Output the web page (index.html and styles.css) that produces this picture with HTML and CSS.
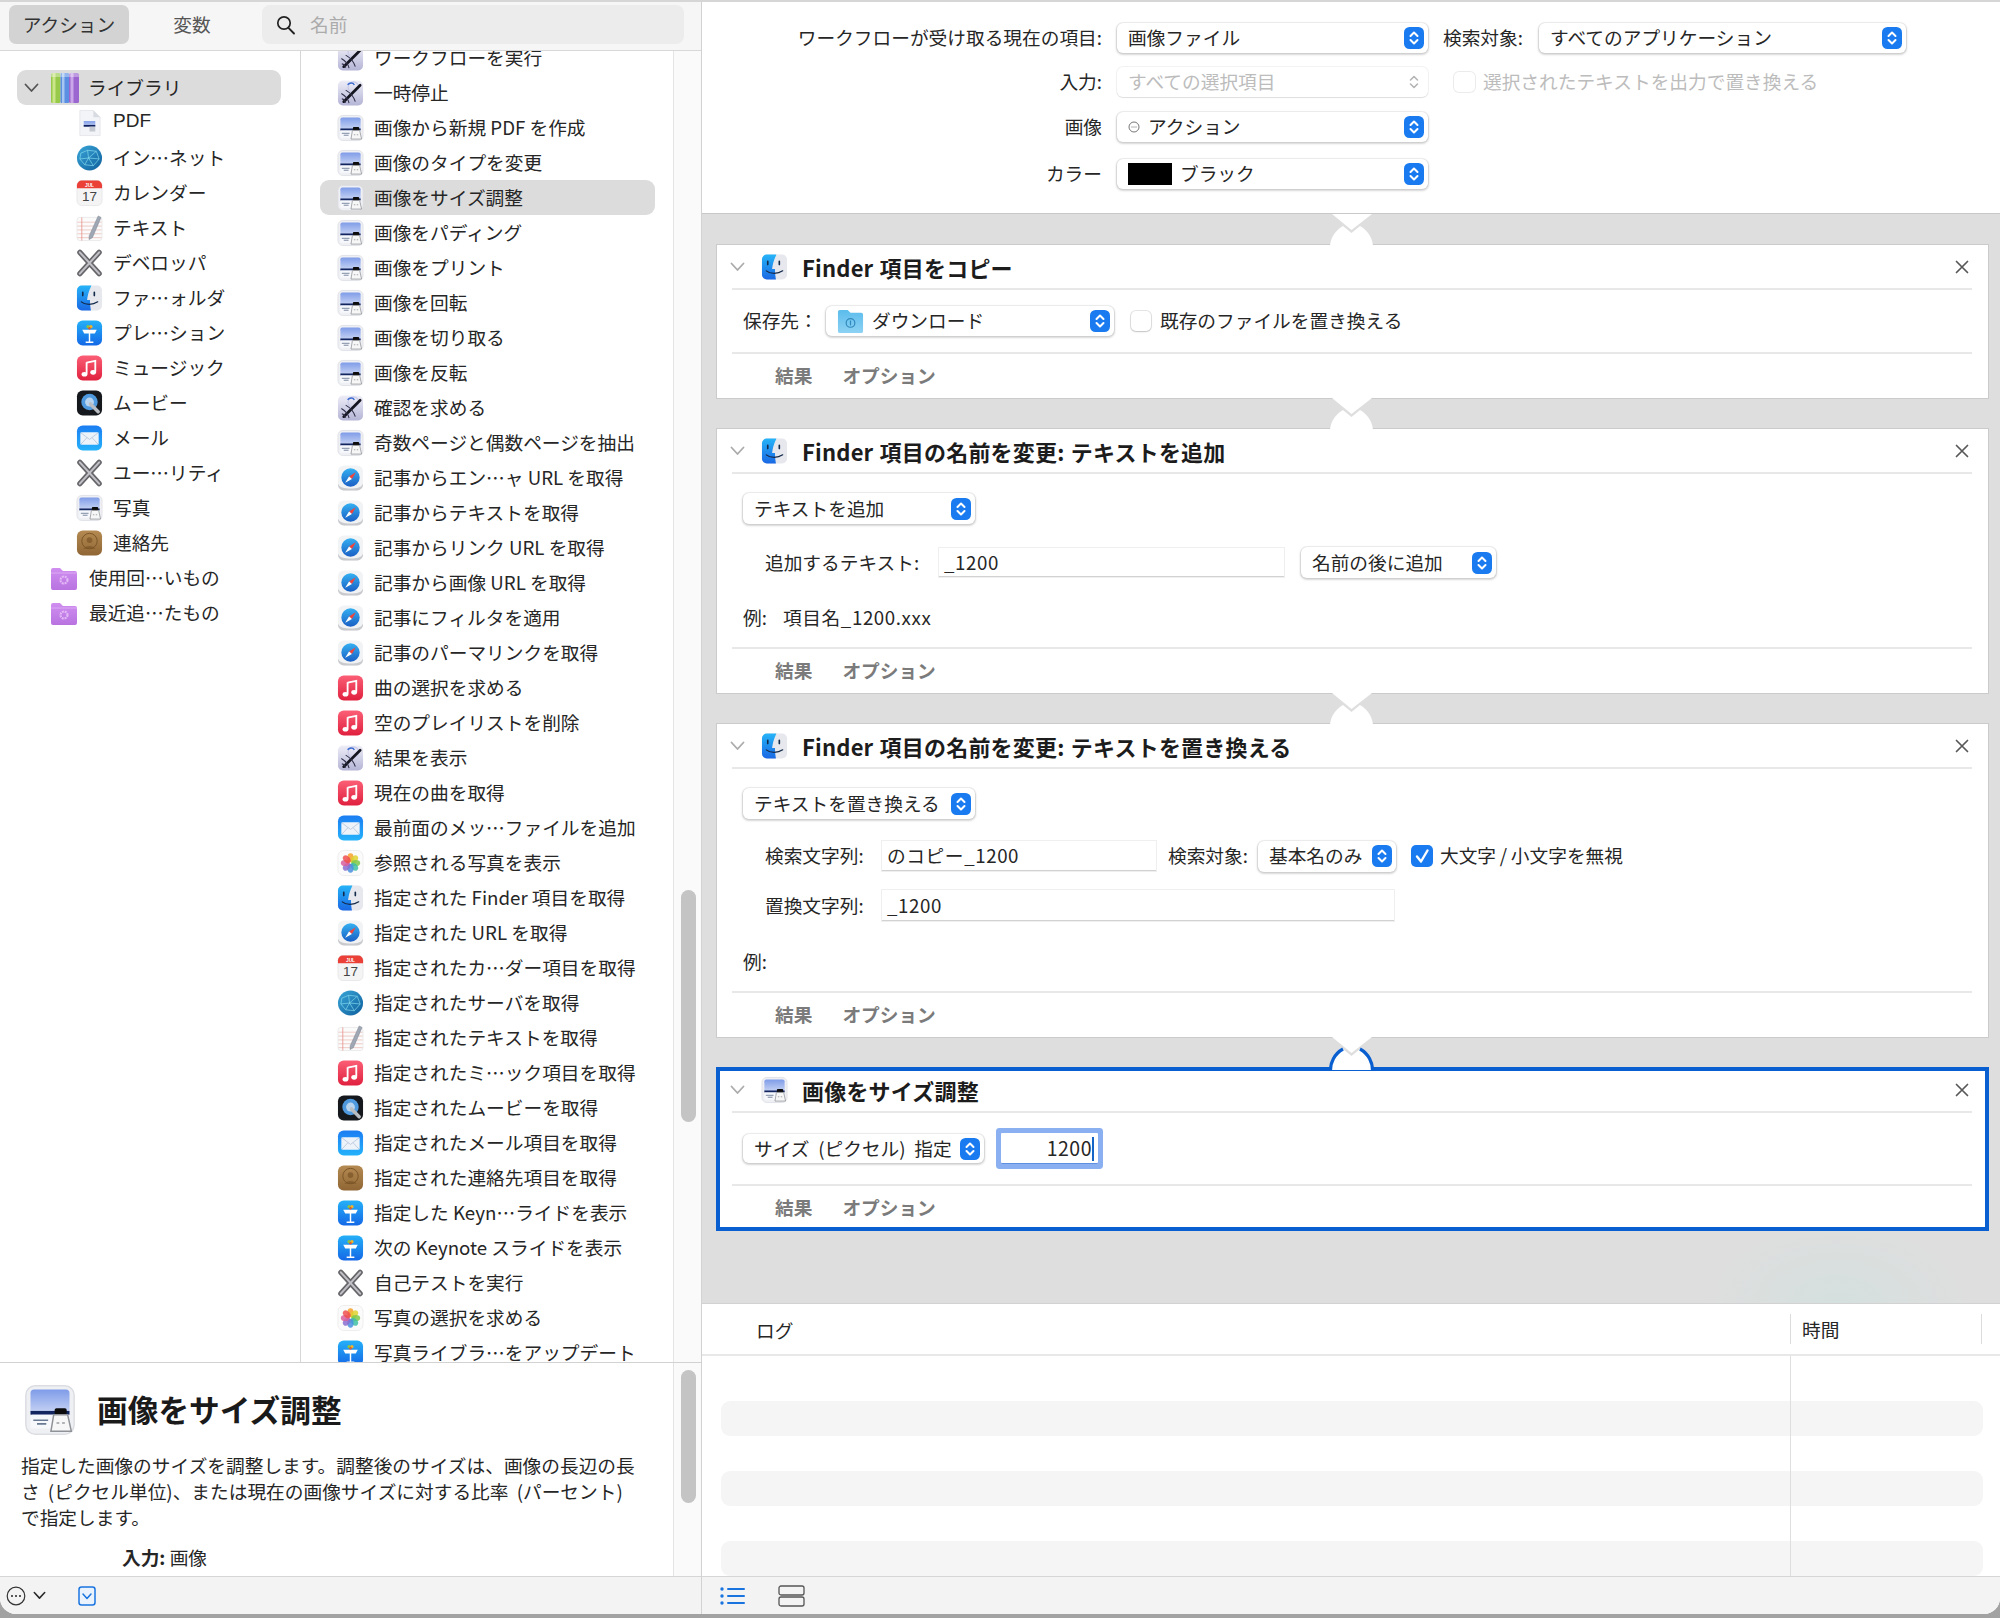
FILE: index.html
```html
<!DOCTYPE html>
<html lang="ja">
<head>
<meta charset="utf-8">
<title>Automator</title>
<link rel="stylesheet" href="styles.css">
</head>
<body>
<svg class="sprite" xmlns="http://www.w3.org/2000/svg" aria-hidden="true">
  <defs>
    <linearGradient id="gSky" x1="0" y1="0" x2="0" y2="1"><stop offset="0" stop-color="#7f9ce8"/><stop offset="1" stop-color="#ccd7f4"/></linearGradient>
    <linearGradient id="gRobot" x1="0" y1="0" x2="0" y2="1"><stop offset="0" stop-color="#eeeef8"/><stop offset="1" stop-color="#b4b4d6"/></linearGradient>
    <linearGradient id="gSafari" x1="0" y1="0" x2="0" y2="1"><stop offset="0" stop-color="#35b0f2"/><stop offset="1" stop-color="#1a5fc4"/></linearGradient>
    <linearGradient id="gMusic" x1="0" y1="0" x2="0" y2="1"><stop offset="0" stop-color="#fb5f76"/><stop offset="1" stop-color="#e0203e"/></linearGradient>
    <linearGradient id="gMail" x1="0" y1="0" x2="0" y2="1"><stop offset="0" stop-color="#1b7df2"/><stop offset="1" stop-color="#25b2fb"/></linearGradient>
    <linearGradient id="gKey" x1="0" y1="0" x2="0" y2="1"><stop offset="0" stop-color="#25b0f8"/><stop offset="1" stop-color="#1468e6"/></linearGradient>
    <linearGradient id="gFinder" x1="0" y1="0" x2="0" y2="1"><stop offset="0" stop-color="#26b4f8"/><stop offset="1" stop-color="#1a68e4"/></linearGradient>
    <linearGradient id="gGlobe" x1="0" y1="0" x2="1" y2="1"><stop offset="0" stop-color="#3aa6d8"/><stop offset="1" stop-color="#0f5f9c"/></linearGradient>
    <linearGradient id="gBrown" x1="0" y1="0" x2="0" y2="1"><stop offset="0" stop-color="#b58a52"/><stop offset="1" stop-color="#8f6634"/></linearGradient>
    <linearGradient id="gFolder" x1="0" y1="0" x2="0" y2="1"><stop offset="0" stop-color="#d08ef0"/><stop offset="1" stop-color="#b873e0"/></linearGradient>
    <linearGradient id="gDl" x1="0" y1="0" x2="0" y2="1"><stop offset="0" stop-color="#5bbcec"/><stop offset="1" stop-color="#8dd2f4"/></linearGradient>
  </defs>
  <symbol id="i-img" viewBox="0 0 28 28">
    <rect x="1" y="1" width="26" height="26" rx="5" fill="#eff0f4" stroke="#dcdde2" stroke-width=".8"/>
    <rect x="3.500" y="3" width="21" height="13.500" rx="2" fill="url(#gSky)"/>
    <rect x="3.500" y="14.500" width="21" height="2" fill="#14265f"/>
    <rect x="3.500" y="16.500" width="21" height="7.500" rx="1" fill="#f6f8fc"/>
    <path d="M5 19.500h8M7 21.500h5" stroke="#6a7a94" stroke-width=".9"/>
    <rect x="16.500" y="13" width="6.500" height="3.500" rx="1" fill="#0c0c0c"/>
    <path d="M16 16.500h7.500l2 9h-11z" fill="#f7f7f7" stroke="#8f9297" stroke-width=".8"/>
    <path d="M17.500 21h1.500M20.500 21h1.500" stroke="#9a9da3" stroke-width=".9"/>
  </symbol>
  <symbol id="i-robot" viewBox="0 0 28 28">
    <rect x="1" y="1" width="26" height="26" rx="5" fill="url(#gRobot)"/>
    <circle cx="17" cy="8" r="5.500" fill="none" stroke="#c6c8e6" stroke-width="1.200"/>
    <path d="M7 23 24 6" stroke="#15151f" stroke-width="2.800" stroke-linecap="round"/>
    <path d="M4.500 14.500c3.500 2 7 5.500 8 10M9 11c4.500 2.500 8.500 7 10 12M5 20c2 .5 3.500 2 4 4" stroke="#2f2f48" stroke-width="1.100" fill="none"/>
    <path d="M11 5.500c2-2.500 5.500-2.500 7 0" stroke="#3c6cd0" stroke-width="1.500" fill="none"/>
  </symbol>
  <symbol id="i-safari" viewBox="0 0 28 28">
    <rect x="1" y="1" width="26" height="26" rx="6" fill="#f2f3f5"/>
    <path d="M1 20v1a6 6 0 0 0 6 6h14a6 6 0 0 0 6-6v-1c-2 4-6 5-13 5s-11-1-13-5z" fill="#c9cacd"/>
    <circle cx="14" cy="13.500" r="9.500" fill="url(#gSafari)"/>
    <path d="M19.500 8 12.500 12.500 15.500 15z" fill="#f0433a"/>
    <path d="M8.500 19 12.500 12.500 15.500 15z" fill="#fff"/>
  </symbol>
  <symbol id="i-music" viewBox="0 0 28 28">
    <rect x="1" y="1" width="26" height="26" rx="6" fill="url(#gMusic)"/>
    <path d="M11 8.500 20 6.500v11.500" fill="none" stroke="#fff" stroke-width="1.900"/>
    <path d="M11 8v12" stroke="#fff" stroke-width="1.900"/>
    <ellipse cx="8.800" cy="20.500" rx="3" ry="2.400" fill="#fff"/>
    <ellipse cx="17.800" cy="18.500" rx="3" ry="2.400" fill="#fff"/>
  </symbol>
  <symbol id="i-mail" viewBox="0 0 28 28">
    <rect x="1" y="1" width="26" height="26" rx="6" fill="url(#gMail)"/>
    <rect x="4.500" y="8" width="19" height="13" rx="1.500" fill="#eef3fa"/>
    <path d="M5 8.500 14 15.500 23 8.500M5 20.500l6.500-7M23 20.500l-6.500-7" fill="none" stroke="#b6c6dc" stroke-width=".9"/>
  </symbol>
  <symbol id="i-photos" viewBox="0 0 28 28">
    <rect x="1" y="1" width="26" height="26" rx="6" fill="#fbfbfb" stroke="#e4e4e4" stroke-width=".6"/>
    <g fill-opacity=".85">
      <ellipse cx="14" cy="8.500" rx="3.200" ry="4.600" fill="#f7a12b"/>
      <ellipse cx="14" cy="8.500" rx="3.200" ry="4.600" fill="#dfd12f" transform="rotate(45 14 14)"/>
      <ellipse cx="14" cy="8.500" rx="3.200" ry="4.600" fill="#7ec84a" transform="rotate(90 14 14)"/>
      <ellipse cx="14" cy="8.500" rx="3.200" ry="4.600" fill="#3fbfa3" transform="rotate(135 14 14)"/>
      <ellipse cx="14" cy="8.500" rx="3.200" ry="4.600" fill="#4a8fe0" transform="rotate(180 14 14)"/>
      <ellipse cx="14" cy="8.500" rx="3.200" ry="4.600" fill="#8a6fd0" transform="rotate(225 14 14)"/>
      <ellipse cx="14" cy="8.500" rx="3.200" ry="4.600" fill="#d85f9e" transform="rotate(270 14 14)"/>
      <ellipse cx="14" cy="8.500" rx="3.200" ry="4.600" fill="#ee4f4f" transform="rotate(315 14 14)"/>
    </g>
  </symbol>
  <symbol id="i-finder" viewBox="0 0 28 28">
    <rect x="1" y="1" width="26" height="26" rx="5" fill="#e6e8ee"/>
    <path d="M6 1h10c-3 6-4 11-4.500 15H14.500c0 4 .5 8 1 11H6a5 5 0 0 1-5-5V6a5 5 0 0 1 5-5z" fill="url(#gFinder)"/>
    <path d="M7 8v3.500M19 8v3.500" stroke="#142a4a" stroke-width="1.700" stroke-linecap="round"/>
    <path d="M5.500 18c4 3.500 12 3.500 17 0" fill="none" stroke="#142a4a" stroke-width="1.300" stroke-linecap="round"/>
  </symbol>
  <symbol id="i-cal" viewBox="0 0 28 28">
    <rect x="1" y="1" width="26" height="26" rx="5" fill="#f4f4f5" stroke="#dddde0" stroke-width=".6"/>
    <path d="M1 9V6a5 5 0 0 1 5-5h16a5 5 0 0 1 5 5v3z" fill="#ea4038"/>
  </symbol>
  <symbol id="i-globe" viewBox="0 0 28 28">
    <circle cx="14" cy="14" r="13" fill="url(#gGlobe)"/>
    <path d="M5 9 12 6 21 7 24 15 18 22 9 21 4 15zM12 6 13 14 21 7M13 14 4 15M13 14 18 22M13 14 9 21M13 14 24 15" fill="none" stroke="#8fe3f4" stroke-width=".8" stroke-opacity=".8"/>
  </symbol>
  <symbol id="i-text" viewBox="0 0 28 28">
    <rect x="1" y="3" width="26" height="24" rx="3" fill="#fbfbfb" stroke="#dedede" stroke-width=".6"/>
    <path d="M1.500 8h25M1.500 12h25M1.500 16h25M1.500 20h25M1.500 24h25" stroke="#e5a8a0" stroke-width=".6"/>
    <path d="M6 3v24" stroke="#e58078" stroke-width=".7"/>
    <path d="M23 1.500 26 3 17 24l-3.500 2 .2-4z" fill="#9fa7b4" stroke="#7c8490" stroke-width=".5"/>
  </symbol>
  <symbol id="i-tools" viewBox="0 0 28 28">
    <path d="M4 3 24 25M24 3 4 25" stroke="#66666a" stroke-width="5.500" stroke-linecap="round"/>
    <path d="M4 3 24 25M24 3 4 25" stroke="#c0c0c6" stroke-width="2.200" stroke-linecap="round"/>
  </symbol>
  <symbol id="i-key" viewBox="0 0 28 28">
    <rect x="1" y="1" width="26" height="26" rx="6" fill="url(#gKey)"/>
    <path d="M6.500 10.500h15l-2 4h-11z" fill="#fff"/>
    <path d="M14 14v9M10 23.500h8" stroke="#fff" stroke-width="1.500"/>
    <circle cx="12.500" cy="7.500" r="1.700" fill="#8cc63f"/><circle cx="15.500" cy="7.500" r="1.700" fill="#f0b429"/><circle cx="14" cy="9" r="1.300" fill="#e4572e"/>
  </symbol>
  <symbol id="i-qt" viewBox="0 0 28 28">
    <rect x="1" y="1" width="26" height="26" rx="6" fill="#15181c"/>
    <circle cx="14" cy="13" r="8.500" fill="#4f9adf"/>
    <circle cx="14" cy="13" r="4.600" fill="#b9d4ee"/>
    <path d="M15 15 23 23" stroke="#b9bdc2" stroke-width="3.600" stroke-linecap="round"/>
  </symbol>
  <symbol id="i-contacts" viewBox="0 0 28 28">
    <rect x="1" y="1" width="26" height="26" rx="6" fill="url(#gBrown)"/>
    <circle cx="14" cy="12" r="8" fill="none" stroke="#7a5426" stroke-width="1"/>
    <circle cx="14" cy="11" r="3" fill="#7a5426" fill-opacity=".7"/>
    <path d="M7.500 20c3-4 10-4 13 0" fill="#7a5426" fill-opacity=".7"/>
  </symbol>
  <symbol id="i-folder" viewBox="0 0 28 28">
    <path d="M1 6a2 2 0 0 1 2-2h7l3 3h12a2 2 0 0 1 2 2v15a2 2 0 0 1-2 2H3a2 2 0 0 1-2-2z" fill="url(#gFolder)"/>
    <circle cx="14" cy="16" r="3.500" fill="none" stroke="#e3b8f6" stroke-width="2.200" stroke-dasharray="2 .8"/>
    <path d="M1 9h26" stroke="#e1b3f5" stroke-width=".8"/>
  </symbol>
  <symbol id="i-pdf" viewBox="0 0 28 28">
    <path d="M4 1h14l7 7v19H4z" fill="#f3f4f8" stroke="#dfe0e4" stroke-width=".7"/>
    <path d="M18 1v7h7z" fill="#d9dbe2"/>
    <rect x="8" y="12" width="12" height="6" fill="url(#gSky)"/>
    <rect x="8" y="16" width="12" height="1.800" fill="#10205c"/>
    <rect x="14" y="17.800" width="6" height="5" fill="#c5c9d2"/>
  </symbol>
  <symbol id="i-lib" viewBox="0 0 30 32">
    <rect x="1" y="1" width="9.500" height="30" rx="1.500" fill="#97c94a"/>
    <rect x="2.500" y="1" width="3" height="30" fill="#cbe58a"/>
    <rect x="10.500" y="1" width="8.500" height="30" rx="1" fill="#5a8fe2"/>
    <rect x="12" y="1" width="2.500" height="30" fill="#a7c6f2"/>
    <rect x="19" y="1" width="10" height="30" rx="1.500" fill="#9b66cf"/>
    <rect x="20.500" y="1" width="3" height="30" fill="#cba7ea"/>
    <rect x="1" y="1" width="28" height="4" fill="#fff" fill-opacity=".35"/>
  </symbol>
  <symbol id="i-dl" viewBox="0 0 28 28">
    <path d="M1 4a2 2 0 0 1 2-2h8l3 3h11a2 2 0 0 1 2 2v17a2 2 0 0 1-2 2H3a2 2 0 0 1-2-2z" fill="url(#gDl)"/>
    <circle cx="14" cy="15.500" r="4.500" fill="none" stroke="#2f88bb" stroke-width="1.200"/>
    <path d="M14 13v5" stroke="#2f88bb" stroke-width="1.200"/>
  </symbol>
  <symbol id="i-step" viewBox="0 0 20 22">
    <rect width="20" height="22" rx="5.500" fill="#1a7bf0"/>
    <path d="M6.500 9 10 5.500 13.500 9M6.500 13 10 16.500 13.500 13" fill="none" stroke="#fff" stroke-width="2" stroke-linecap="round" stroke-linejoin="round"/>
  </symbol>
  <symbol id="i-step-off" viewBox="0 0 20 22">
    <path d="M6.500 9 10 5.500 13.500 9M6.500 13 10 16.500 13.500 13" fill="none" stroke="#b5b5b5" stroke-width="1.600" stroke-linecap="round" stroke-linejoin="round"/>
  </symbol>
  <symbol id="i-chev" viewBox="0 0 15 10">
    <path d="M1.500 1.500 7.500 8 13.500 1.500" fill="none" stroke="currentColor" stroke-width="1.800" stroke-linecap="round" stroke-linejoin="round"/>
  </symbol>
  <symbol id="i-x" viewBox="0 0 14 14">
    <path d="M1.500 1.500 12.500 12.500M12.500 1.500 1.500 12.500" fill="none" stroke="#585858" stroke-width="1.700" stroke-linecap="round"/>
  </symbol>
  <symbol id="i-link" viewBox="0 0 45 33">
    <path d="M3 0 22.500 16 43 0z" fill="#fff"/>
    <path d="M1 33C1 26 5 17 14 12L22.500 19 31 12C40 17 44 26 44 33z" fill="#fff"/>
  </symbol>
  <symbol id="i-link-on" viewBox="0 0 45 33">
    <path d="M3 0 22.500 16 43 0z" fill="#fff"/>
    <path d="M1.500 33C1.500 26 5 17 14 12L22.500 19 31 12C40 17 43.500 26 43.500 33z" fill="#fff"/>
    <path d="M1.500 33C1.500 26 5 17 14 12M31 12C40 17 43.500 26 43.500 33" fill="none" stroke="#0a5fd0" stroke-width="3.200"/>
  </symbol>
</svg>

<div class="window">
  <aside class="left">
    <div class="toolbar">
      <div class="seg seg-on">アクション</div>
      <div class="seg seg-off">変数</div>
      <div class="search">
        <svg class="search-ico" viewBox="0 0 20 20"><circle cx="8" cy="8" r="6.200" fill="none" stroke="#222" stroke-width="1.700"/><path d="M12.500 12.800 18 18.500" stroke="#222" stroke-width="1.900" stroke-linecap="round"/></svg>
        <span class="placeholder">名前</span>
      </div>
    </div>

    <div class="browser">
      <nav class="lib">
        <div class="lib-root"><svg class="chev-lib"><use href="#i-chev"/></svg><svg class="ico-lib"><use href="#i-lib"/></svg><span>ライブラリ</span></div>
        <div class="lib-row"><svg class="ico"><use href="#i-pdf"/></svg><span class="t-pdf">PDF</span></div>
        <div class="lib-row"><svg class="ico"><use href="#i-globe"/></svg><span>イン…ネット</span></div>
        <div class="lib-row"><svg class="ico" viewBox="0 0 28 28"><use href="#i-cal"/><text class="cal-mon" x="14" y="7.500" text-anchor="middle">JUL</text><text class="cal-day" x="14" y="22.500" text-anchor="middle">17</text></svg><span>カレンダー</span></div>
        <div class="lib-row"><svg class="ico"><use href="#i-text"/></svg><span>テキスト</span></div>
        <div class="lib-row"><svg class="ico"><use href="#i-tools"/></svg><span>デベロッパ</span></div>
        <div class="lib-row"><svg class="ico"><use href="#i-finder"/></svg><span>ファ…ォルダ</span></div>
        <div class="lib-row"><svg class="ico"><use href="#i-key"/></svg><span>プレ…ション</span></div>
        <div class="lib-row"><svg class="ico"><use href="#i-music"/></svg><span>ミュージック</span></div>
        <div class="lib-row"><svg class="ico"><use href="#i-qt"/></svg><span>ムービー</span></div>
        <div class="lib-row"><svg class="ico"><use href="#i-mail"/></svg><span>メール</span></div>
        <div class="lib-row"><svg class="ico"><use href="#i-tools"/></svg><span>ユー…リティ</span></div>
        <div class="lib-row"><svg class="ico"><use href="#i-img"/></svg><span>写真</span></div>
        <div class="lib-row"><svg class="ico"><use href="#i-contacts"/></svg><span>連絡先</span></div>
        <div class="lib-smart"><svg class="ico-folder"><use href="#i-folder"/></svg><span>使用回…いもの</span></div>
        <div class="lib-smart"><svg class="ico-folder"><use href="#i-folder"/></svg><span>最近追…たもの</span></div>
      </nav>

      <div class="actions">
        <div class="act-list">
          <div class="act"><svg class="ico"><use href="#i-robot"/></svg><span>ワークフローを実行</span></div>
          <div class="act"><svg class="ico"><use href="#i-robot"/></svg><span>一時停止</span></div>
          <div class="act"><svg class="ico"><use href="#i-img"/></svg><span>画像から新規 PDF を作成</span></div>
          <div class="act"><svg class="ico"><use href="#i-img"/></svg><span>画像のタイプを変更</span></div>
          <div class="act act-on"><svg class="ico"><use href="#i-img"/></svg><span>画像をサイズ調整</span></div>
          <div class="act"><svg class="ico"><use href="#i-img"/></svg><span>画像をパディング</span></div>
          <div class="act"><svg class="ico"><use href="#i-img"/></svg><span>画像をプリント</span></div>
          <div class="act"><svg class="ico"><use href="#i-img"/></svg><span>画像を回転</span></div>
          <div class="act"><svg class="ico"><use href="#i-img"/></svg><span>画像を切り取る</span></div>
          <div class="act"><svg class="ico"><use href="#i-img"/></svg><span>画像を反転</span></div>
          <div class="act"><svg class="ico"><use href="#i-robot"/></svg><span>確認を求める</span></div>
          <div class="act"><svg class="ico"><use href="#i-img"/></svg><span>奇数ページと偶数ページを抽出</span></div>
          <div class="act"><svg class="ico"><use href="#i-safari"/></svg><span>記事からエン…ャ URL を取得</span></div>
          <div class="act"><svg class="ico"><use href="#i-safari"/></svg><span>記事からテキストを取得</span></div>
          <div class="act"><svg class="ico"><use href="#i-safari"/></svg><span>記事からリンク URL を取得</span></div>
          <div class="act"><svg class="ico"><use href="#i-safari"/></svg><span>記事から画像 URL を取得</span></div>
          <div class="act"><svg class="ico"><use href="#i-safari"/></svg><span>記事にフィルタを適用</span></div>
          <div class="act"><svg class="ico"><use href="#i-safari"/></svg><span>記事のパーマリンクを取得</span></div>
          <div class="act"><svg class="ico"><use href="#i-music"/></svg><span>曲の選択を求める</span></div>
          <div class="act"><svg class="ico"><use href="#i-music"/></svg><span>空のプレイリストを削除</span></div>
          <div class="act"><svg class="ico"><use href="#i-robot"/></svg><span>結果を表示</span></div>
          <div class="act"><svg class="ico"><use href="#i-music"/></svg><span>現在の曲を取得</span></div>
          <div class="act"><svg class="ico"><use href="#i-mail"/></svg><span>最前面のメッ…ファイルを追加</span></div>
          <div class="act"><svg class="ico"><use href="#i-photos"/></svg><span>参照される写真を表示</span></div>
          <div class="act"><svg class="ico"><use href="#i-finder"/></svg><span>指定された Finder 項目を取得</span></div>
          <div class="act"><svg class="ico"><use href="#i-safari"/></svg><span>指定された URL を取得</span></div>
          <div class="act"><svg class="ico" viewBox="0 0 28 28"><use href="#i-cal"/><text class="cal-mon" x="14" y="7.500" text-anchor="middle">JUL</text><text class="cal-day" x="14" y="22.500" text-anchor="middle">17</text></svg><span>指定されたカ…ダー項目を取得</span></div>
          <div class="act"><svg class="ico"><use href="#i-globe"/></svg><span>指定されたサーバを取得</span></div>
          <div class="act"><svg class="ico"><use href="#i-text"/></svg><span>指定されたテキストを取得</span></div>
          <div class="act"><svg class="ico"><use href="#i-music"/></svg><span>指定されたミ…ック項目を取得</span></div>
          <div class="act"><svg class="ico"><use href="#i-qt"/></svg><span>指定されたムービーを取得</span></div>
          <div class="act"><svg class="ico"><use href="#i-mail"/></svg><span>指定されたメール項目を取得</span></div>
          <div class="act"><svg class="ico"><use href="#i-contacts"/></svg><span>指定された連絡先項目を取得</span></div>
          <div class="act"><svg class="ico"><use href="#i-key"/></svg><span>指定した Keyn…ライドを表示</span></div>
          <div class="act"><svg class="ico"><use href="#i-key"/></svg><span>次の Keynote スライドを表示</span></div>
          <div class="act"><svg class="ico"><use href="#i-tools"/></svg><span>自己テストを実行</span></div>
          <div class="act"><svg class="ico"><use href="#i-photos"/></svg><span>写真の選択を求める</span></div>
          <div class="act"><svg class="ico"><use href="#i-key"/></svg><span>写真ライブラ…をアップデート</span></div>
        </div>
      </div>
      <div class="track"><div class="thumb thumb-list"></div></div>
    </div>

    <div class="desc">
      <div class="desc-body">
        <div class="desc-head"><svg class="ico-desc"><use href="#i-img"/></svg><h1>画像をサイズ調整</h1></div>
        <p class="desc-text">指定した画像のサイズを調整します。調整後のサイズは、画像の長辺の長さ (ピクセル単位)、または現在の画像サイズに対する比率 (パーセント)で指定します。</p>
        <p class="desc-input"><b>入力:</b> 画像</p>
      </div>
      <div class="track"><div class="thumb thumb-desc"></div></div>
    </div>

    <div class="bar bar-left">
      <svg class="more" viewBox="0 0 20 20"><circle cx="10" cy="10" r="8.800" fill="none" stroke="#333" stroke-width="1.200"/><circle cx="6" cy="10" r="1.100" fill="#333"/><circle cx="10" cy="10" r="1.100" fill="#333"/><circle cx="14" cy="10" r="1.100" fill="#333"/></svg>
      <svg class="more-chev"><use href="#i-chev"/></svg>
      <svg class="bluebox" viewBox="0 0 18 20"><rect x="1" y="1" width="16" height="18" rx="2.500" fill="#eaf2fd" stroke="#1a74e0" stroke-width="1.500"/><path d="M5 8 9 12.500 13 8" fill="none" stroke="#1a74e0" stroke-width="1.500" stroke-linecap="round" stroke-linejoin="round"/></svg>
    </div>
  </aside>

  <main class="main">
    <section class="form">
      <div class="frow frow-a">
        <label class="flabel">ワークフローが受け取る現在の項目:</label>
        <div class="sel w-311"><span>画像ファイル</span><svg class="step"><use href="#i-step"/></svg></div>
        <label class="flabel-2">検索対象:</label>
        <div class="sel w-367"><span>すべてのアプリケーション</span><svg class="step"><use href="#i-step"/></svg></div>
      </div>
      <div class="frow frow-b">
        <label class="flabel">入力:</label>
        <div class="sel sel-off w-311"><span>すべての選択項目</span><svg class="step"><use href="#i-step-off"/></svg></div>
        <span class="check check-off"></span>
        <span class="dim">選択されたテキストを出力で置き換える</span>
      </div>
      <div class="frow frow-c">
        <label class="flabel">画像</label>
        <div class="sel w-311"><span class="with-ico"><svg class="mini" viewBox="0 0 12 12"><circle cx="6" cy="6" r="5" fill="none" stroke="#666" stroke-width=".9"/><path d="M3.500 6h5" stroke="#666" stroke-width="1" stroke-dasharray="1 1"/></svg>アクション</span><svg class="step"><use href="#i-step"/></svg></div>
      </div>
      <div class="frow frow-d">
        <label class="flabel">カラー</label>
        <div class="sel w-311"><span class="with-ico"><i class="swatch"></i>ブラック</span><svg class="step"><use href="#i-step"/></svg></div>
      </div>
    </section>

    <section class="canvas">
      <div class="link link-first"><svg class="link-svg"><use href="#i-link"/></svg></div>
      <article class="card">
        <header class="card-head"><svg class="chev"><use href="#i-chev"/></svg><svg class="ico-card"><use href="#i-finder"/></svg><h2>Finder 項目をコピー</h2><svg class="close"><use href="#i-x"/></svg></header>
        <div class="card-body body-1">
          <span class="lab-save">保存先：</span>
          <div class="sel w-288"><span class="with-ico-2"><svg class="ico-dl"><use href="#i-dl"/></svg>ダウンロード</span><svg class="step"><use href="#i-step"/></svg></div>
          <span class="check check-save"></span>
          <span>既存のファイルを置き換える</span>
        </div>
        <footer class="card-tabs"><span>結果</span><span>オプション</span></footer>
      </article>

      <div class="link"><svg class="link-svg"><use href="#i-link"/></svg></div>
      <article class="card">
        <header class="card-head"><svg class="chev"><use href="#i-chev"/></svg><svg class="ico-card"><use href="#i-finder"/></svg><h2>Finder 項目の名前を変更: テキストを追加</h2><svg class="close"><use href="#i-x"/></svg></header>
        <div class="card-body body-col">
          <div class="sel w-232 h-31"><span>テキストを追加</span><svg class="step"><use href="#i-step"/></svg></div>
          <div class="row row-1">
            <span class="lab w-173">追加するテキスト:</span>
            <div class="inp w-347"><span>_1200</span></div>
            <div class="sel w-195 ml-16 h-31"><span>名前の後に追加</span><svg class="step"><use href="#i-step"/></svg></div>
          </div>
          <div class="row-ex"><span class="ex-lab">例:</span><span class="ex-val">項目名_1200.xxx</span></div>
        </div>
        <footer class="card-tabs"><span>結果</span><span>オプション</span></footer>
      </article>

      <div class="link"><svg class="link-svg"><use href="#i-link"/></svg></div>
      <article class="card">
        <header class="card-head"><svg class="chev"><use href="#i-chev"/></svg><svg class="ico-card"><use href="#i-finder"/></svg><h2>Finder 項目の名前を変更: テキストを置き換える</h2><svg class="close"><use href="#i-x"/></svg></header>
        <div class="card-body body-col">
          <div class="sel w-232 h-31"><span>テキストを置き換える</span><svg class="step"><use href="#i-step"/></svg></div>
          <div class="row row-2">
            <span class="lab w-116">検索文字列:</span>
            <div class="inp w-276 h-32"><span>のコピー_1200</span></div>
            <span class="lab-mid">検索対象:</span>
            <div class="sel w-138 h-31"><span>基本名のみ</span><svg class="step"><use href="#i-step"/></svg></div>
            <span class="check check-on"><svg viewBox="0 0 22 22"><path d="M6 11.500 10 16.500 16.500 5.500" fill="none" stroke="#fff" stroke-width="2.400" stroke-linecap="round" stroke-linejoin="round"/></svg></span>
            <span>大文字&#8201;/&#8201;小文字を無視</span>
          </div>
          <div class="row row-3">
            <span class="lab w-116">置換文字列:</span>
            <div class="inp w-514 h-33"><span>_1200</span></div>
          </div>
          <div class="row-ex"><span class="ex-lab">例:</span></div>
        </div>
        <footer class="card-tabs"><span>結果</span><span>オプション</span></footer>
      </article>

      <div class="link"><svg class="link-svg"><use href="#i-link-on"/></svg></div>
      <article class="card card-on">
        <header class="card-head"><svg class="chev"><use href="#i-chev"/></svg><svg class="ico-card"><use href="#i-img"/></svg><h2>画像をサイズ調整</h2><svg class="close"><use href="#i-x"/></svg></header>
        <div class="card-body body-4">
          <div class="sel w-241 h-29"><span class="ws">サイズ (ピクセル) 指定</span><svg class="step"><use href="#i-step"/></svg></div>
          <div class="focus"><span>1200</span><i class="caret"></i></div>
        </div>
        <footer class="card-tabs"><span>結果</span><span>オプション</span></footer>
      </article>
    </section>

    <section class="log">
      <div class="log-head">
        <span class="log-c1">ログ</span>
        <span class="log-c2">時間</span>
      </div>
      <div class="log-body">
        <i class="log-line"></i>
        <div class="log-row"></div>
        <div class="log-row log-alt"></div>
        <div class="log-row"></div>
        <div class="log-row log-alt"></div>
        <div class="log-row"></div>
        <div class="log-row log-alt"></div>
      </div>
    </section>

    <div class="bar bar-right">
      <svg class="bar-list" viewBox="0 0 25 20"><g fill="#1a74e0"><circle cx="2" cy="3" r="1.700"/><circle cx="2" cy="10" r="1.700"/><circle cx="2" cy="17" r="1.700"/><rect x="7" y="2" width="18" height="2" rx="1"/><rect x="7" y="9" width="18" height="2" rx="1"/><rect x="7" y="16" width="18" height="2" rx="1"/></g></svg>
      <svg class="bar-flow" viewBox="0 0 27 22"><rect x="1" y="1" width="25" height="9" rx="2" fill="none" stroke="#555" stroke-width="1.300"/><rect x="1" y="12" width="25" height="9" rx="2" fill="none" stroke="#555" stroke-width="1.300"/></svg>
    </div>
  </main>
</div>
</body>
</html>
```

FILE: styles.css
```css
* { box-sizing: border-box; }
html, body { margin: 0; padding: 0; }
body {
  width: 2000px;
  height: 1618px;
  overflow: hidden;
  background: #a2a2a2;
  font-family: "Noto Sans CJK JP", "Noto Sans", sans-serif;
  font-size: 18.7px;
  color: #262626;
}
.sprite { position: absolute; width: 0; height: 0; overflow: hidden; }
.cal-mon { font: 700 5px "Liberation Sans", sans-serif; fill: #fff; }
.cal-day { font: 400 14px "Liberation Sans", sans-serif; fill: #444; }

/* Raises Noto's glyph box to where the reference's text sits in its row. */
.act span,
.lib-row span,
.lib-smart span,
.lib-root span,
.placeholder,
.flabel,
.flabel-2,
.dim,
.sel > span,
.card-body > span:not(.check),
.row > span:not(.check),
.inp span,
.focus span,
.card-tabs span { margin-bottom: 3px; }

.window {
  display: flex;
  width: 2000px;
  height: 1614px;
  background: #fff;
  border-top: 2px solid #d6d6d6;
  border-radius: 0 0 16px 16px;
  overflow: hidden;
}

/* left pane */
.left {
  display: flex;
  flex-direction: column;
  width: 702px;
  flex: none;
  border-right: 1px solid #d2d2d2;
}
.toolbar {
  display: flex;
  align-items: center;
  flex: none;
  height: 49px;
  padding: 0 0 3px 9px;
  background: #f6f6f6;
  border-bottom: 1px solid #d8d8d8;
}
.seg {
  display: flex;
  align-items: center;
  justify-content: center;
  height: 39px;
  padding-bottom: 2px;
  border-radius: 7px;
}
.seg-on { width: 120px; background: #d3d3d3; color: #333; }
.seg-off { width: 98px; margin-left: 14px; color: #555; }
.search {
  display: flex;
  align-items: center;
  width: 422px;
  height: 39px;
  margin-left: 21px;
  padding-left: 14px;
  background: #ececec;
  border-radius: 8px;
}
.search-ico { width: 20px; height: 20px; }
.placeholder { margin-left: 14px; color: #ababab; }

.browser { display: flex; height: 1311px; flex: none; }

.lib {
  width: 301px;
  flex: none;
  padding-top: 19px;
  border-right: 1px solid #d6d6d6;
}
.lib-root {
  display: flex;
  align-items: center;
  width: 264px;
  height: 35px;
  margin-left: 17px;
  padding-left: 7px;
  background: #dcdcdc;
  border-radius: 9px;
}
.chev-lib { width: 15px; height: 10px; color: #555; }
.ico-lib { width: 30px; height: 32px; margin: 0 8px 0 11px; }
.lib-row {
  display: flex;
  align-items: center;
  gap: 10px;
  height: 35px;
  padding-left: 76px;
}
.t-pdf { font-family: "Liberation Sans", sans-serif; font-size: 19px; }
.lib-smart {
  display: flex;
  align-items: center;
  gap: 11px;
  height: 35px;
  padding-left: 50px;
}
.ico { width: 27px; height: 28px; flex: none; }
.ico-folder { width: 28px; height: 28px; flex: none; }

.actions {
  width: 372px;
  flex: none;
  overflow: hidden;
}
.act-list { margin-top: -11px; }
.act {
  display: flex;
  align-items: center;
  gap: 10px;
  height: 35px;
  margin: 0 18px 0 19px;
  padding-left: 17px;
  white-space: nowrap;
}
.act-on { background: #dcdcdc; border-radius: 9px; }

.track {
  width: 28px;
  flex: none;
  padding-left: 7px;
  background: #fafafa;
  border-left: 1px solid #e4e4e4;
}
.thumb { width: 15px; border-radius: 8px; background: #c4c4c4; }
.thumb-list { height: 232px; margin-top: 839px; }
.thumb-desc { height: 133px; margin-top: 7px; }

.desc {
  display: flex;
  flex: none;
  height: 214px;
  border-top: 1px solid #d2d2d2;
  overflow: hidden;
}
.desc-body { width: 673px; flex: none; padding: 22px 33px 0 21px; }
.desc-head { display: flex; align-items: center; height: 50px; }
.ico-desc { width: 52px; height: 52px; margin-left: 3px; flex: none; }
.desc-head h1 { margin: 0 0 4px 21px; font-size: 30.7px; font-weight: 700; color: #1a1a1a; white-space: nowrap; }
.desc-text { margin: 17px 0 0; line-height: 26px; word-spacing: 4px; }
.desc-input { margin: 14px 0 0 101px; line-height: 26px; }
.desc-input b { font-weight: 700; }

.bar {
  display: flex;
  align-items: center;
  flex: none;
  height: 38px;
  background: #f3f3f3;
  border-top: 1px solid #d6d6d6;
}
.more { width: 20px; height: 20px; margin-left: 6px; }
.more-chev { width: 13px; height: 9px; margin-left: 7px; color: #2a2a2a; }
.bluebox { width: 18px; height: 20px; margin-left: 32px; }
.bar-list { width: 25px; height: 20px; margin-left: 18px; }
.bar-flow { width: 27px; height: 22px; margin-left: 33px; }

/* main pane */
.main {
  display: flex;
  flex-direction: column;
  flex: 1;
  min-width: 0;
}
.form { flex: none; height: 211px; padding-top: 21px; background: #fff; }
.frow { display: flex; align-items: center; }
.frow-b { margin-top: 14px; }
.frow-c { margin-top: 15px; }
.frow-d { margin-top: 17px; }
.flabel { width: 400px; margin-right: 15px; text-align: right; white-space: nowrap; }
.flabel-2 { width: 81px; margin: 0 15px 3px 15px; white-space: nowrap; }
.dim { margin-left: 8px; color: #bcbcbc; }

.sel {
  display: flex;
  align-items: center;
  justify-content: space-between;
  flex: none;
  height: 30px;
  padding: 0 4px 0 11px;
  background: #fff;
  border-radius: 6px;
  box-shadow: 0 0 0 1px rgba(0, 0, 0, .04), 0 1px 2px 1px rgba(0, 0, 0, .16);
  white-space: nowrap;
}
.sel-off { color: #bcbcbc; box-shadow: 0 0 0 1px rgba(0, 0, 0, .05), 0 1px 1px rgba(0, 0, 0, .08); }
.step { width: 20px; height: 22px; flex: none; }
.with-ico { display: flex; align-items: center; }
.with-ico-2 { display: flex; align-items: center; gap: 8px; }
.mini { width: 12px; height: 12px; margin: 3px 8px 0 0; }
.swatch { display: block; width: 44px; height: 22px; margin: 3px 8px 0 0; background: #000; }
.ico-dl { width: 27px; height: 27px; margin-top: 3px; }
.ws { word-spacing: 4.5px; }
.w-138 { width: 138px; }
.w-195 { width: 195px; }
.w-232 { width: 232px; }
.w-241 { width: 241px; }
.w-288 { width: 288px; }
.w-311 { width: 311px; }
.w-367 { width: 367px; }
.h-29 { height: 29px; }
.h-31 { height: 31px; }
.ml-16 { margin-left: 16px; }

.check {
  display: block;
  flex: none;
  width: 20px;
  height: 20px;
  background: #fff;
  border-radius: 5px;
  box-shadow: 0 0 0 1px rgba(0, 0, 0, .1), 0 1px 2px rgba(0, 0, 0, .15);
}
.check-off { width: 21px; margin-left: 26px; box-shadow: 0 0 0 1px rgba(0, 0, 0, .08); }
.check-save { margin: 0 9px 0 17px; }
.check-on {
  width: 22px;
  height: 22px;
  margin: 0 7px 0 15px;
  background: #1a7bf0;
  box-shadow: none;
}
.check-on svg { display: block; width: 22px; height: 22px; }

/* workflow canvas */
.canvas {
  flex: 1;
  min-height: 0;
  padding: 0 12px 0 15px;
  background: radial-gradient(ellipse 130px 80px at 1135px 1090px, #d4e0de, rgba(222, 222, 222, 0)), #dedede;
  border-top: 1px solid #c8c8c8;
}
.link { display: flex; justify-content: center; height: 31px; }
.link-svg {
  display: block;
  position: relative;
  width: 45px;
  height: 33px;
  margin-left: -2px;
  z-index: 1;
}
.card {
  background: #fff;
  box-shadow: 0 0 0 1px #cbcbcb;
}
.card-on { box-shadow: inset 0 0 0 3px #0a5fd0, 0 0 0 1px #0a5fd0; }
.card-head {
  display: flex;
  align-items: center;
  height: 45px;
  margin: 0 16px 0 15px;
  border-bottom: 2px solid #e8e8e8;
}
.card-head h2 { margin: 0 0 0 14px; font-size: 22px; font-weight: 700; letter-spacing: .2px; word-spacing: 1px; color: #1c1c1c; white-space: nowrap; }
.chev { width: 15px; height: 10px; margin-left: -2px; color: #ababab; }
.ico-card { width: 27px; height: 28px; margin-left: 16px; }
.close { width: 14px; height: 14px; margin: 0 3px 0 auto; }
.card-body { margin: 0 16px 0 15px; padding-left: 11px; border-bottom: 2px solid #e8e8e8; }
.body-1 { display: flex; align-items: center; height: 64px; }
.body-col { display: flex; flex-direction: column; align-items: flex-start; padding-top: 19px; padding-bottom: 15px; }
.body-4 { display: flex; align-items: center; height: 73px; }
.lab-save { width: 83px; flex: none; }
.card-tabs {
  display: flex;
  align-items: center;
  gap: 30px;
  height: 44px;
  padding-left: 58px;
  font-weight: 700;
  color: #7b7b7b;
}

.row { display: flex; align-items: center; white-space: nowrap; }
.row-1 { margin: 23px 0 0 22px; }
.row-2 { margin: 21px 0 0 22px; }
.row-3 { margin: 17px 0 0 22px; }
.row-ex { display: flex; height: 28px; margin-top: 26px; line-height: 25px; }
.ex-lab { width: 40px; }
.ex-val { letter-spacing: .6px; }
.lab { flex: none; }
.w-116 { width: 116px; }
.w-173 { width: 173px; }
.lab-mid { width: 90px; margin-left: 11px; flex: none; }

.inp {
  display: flex;
  align-items: center;
  flex: none;
  height: 31px;
  padding-left: 6px;
  background: #fff;
  letter-spacing: .6px;
  box-shadow: inset 0 0 0 1px #efefef, inset 0 -2px 0 #d2d2d2;
}
.w-276 { width: 276px; }
.w-347 { width: 347px; }
.w-514 { width: 514px; }
.h-32 { height: 32px; }
.h-33 { height: 33px; }

.focus {
  display: flex;
  align-items: center;
  justify-content: flex-end;
  width: 97px;
  height: 31px;
  margin-left: 17px;
  padding-right: 4px;
  background: #fff;
  border-radius: 1px;
  font-size: 19.5px;
  letter-spacing: .5px;
  box-shadow: 0 0 0 5px #8ab0f2, inset 0 -1px 0 #5f8fe0;
}
.caret { display: block; width: 2px; height: 24px; background: #1464c8; }

/* log */
.log { flex: none; height: 273px; background: #fff; border-top: 1px solid #d2d2d2; }
.log-head {
  display: flex;
  align-items: center;
  height: 52px;
  border-bottom: 2px solid #e8e8e8;
}
.log-c1 { width: 1088px; padding-left: 54px; }
.log-c2 {
  width: 192px;
  height: 30px;
  padding-left: 11px;
  line-height: 30px;
  border-left: 1px solid #dcdcdc;
  border-right: 1px solid #dcdcdc;
}
.log-body { position: relative; height: 220px; padding: 10px 17px 0 19px; overflow: hidden; }
.log-line { position: absolute; left: 1088px; top: 0; bottom: 0; width: 1px; background: #dfdfdf; z-index: 1; }
.log-row { height: 35px; }
.log-alt { background: #f5f5f5; border-radius: 9px; }
```
